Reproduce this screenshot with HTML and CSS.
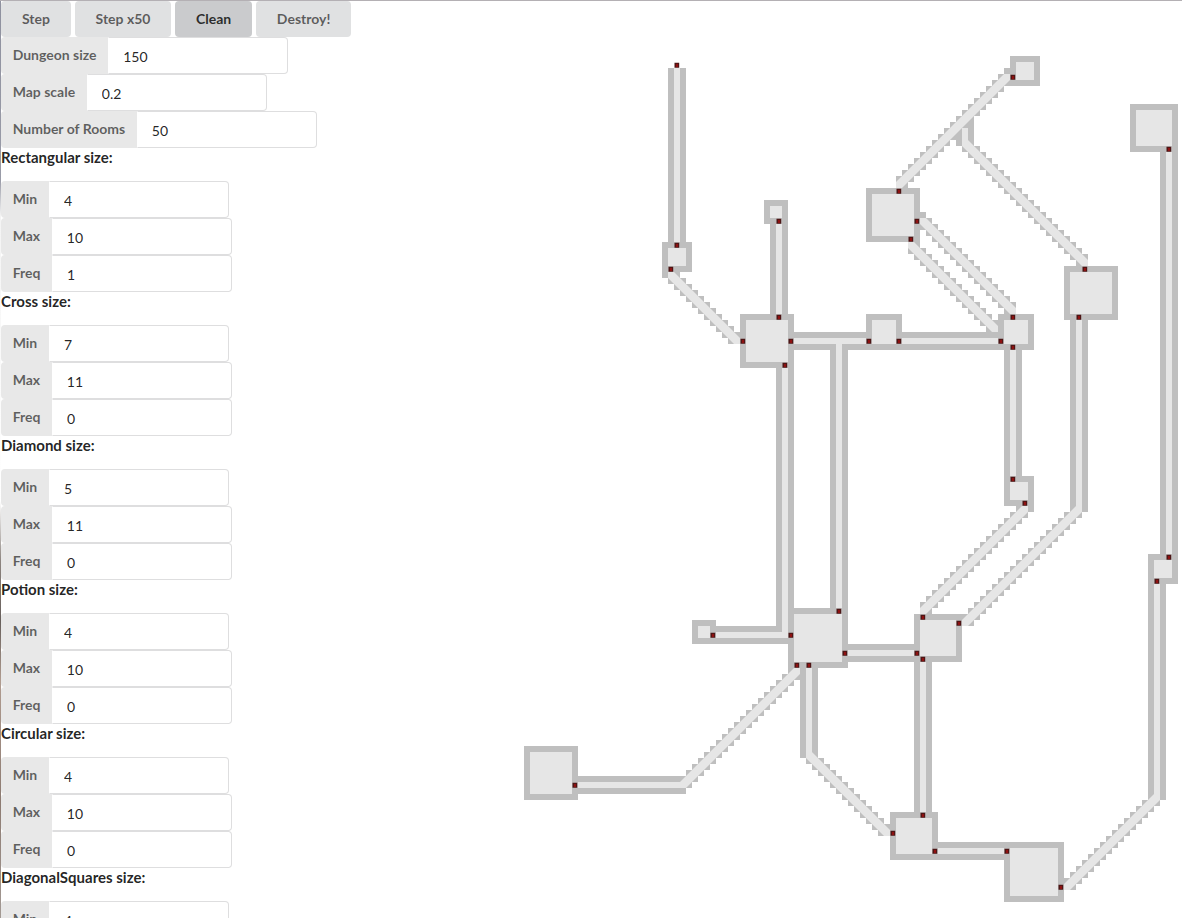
FILE: index.html
```html
<!DOCTYPE html>
<html lang="en">
<head>
<meta charset="utf-8">
<title>Dungeon generator</title>
<link rel="stylesheet" href="styles.css">
</head>
<body>
<main class="app">
  <section class="panel">
    <div class="buttons">
      <button class="button">Step</button>
      <button class="button">Step x50</button>
      <button class="button active">Clean</button>
      <button class="button">Destroy!</button>
    </div>
    <label class="field"><span class="label">Dungeon size</span><input class="value" value="150"></label>
    <label class="field"><span class="label">Map scale</span><input class="value" value="0.2"></label>
    <label class="field"><span class="label">Number of Rooms</span><input class="value" value="50"></label>

    <h4 class="heading">Rectangular size:</h4>
    <label class="field"><span class="label">Min</span><input class="value" value="4"></label>
    <label class="field"><span class="label">Max</span><input class="value" value="10"></label>
    <label class="field"><span class="label">Freq</span><input class="value" value="1"></label>

    <h4 class="heading">Cross size:</h4>
    <label class="field"><span class="label">Min</span><input class="value" value="7"></label>
    <label class="field"><span class="label">Max</span><input class="value" value="11"></label>
    <label class="field"><span class="label">Freq</span><input class="value" value="0"></label>

    <h4 class="heading">Diamond size:</h4>
    <label class="field"><span class="label">Min</span><input class="value" value="5"></label>
    <label class="field"><span class="label">Max</span><input class="value" value="11"></label>
    <label class="field"><span class="label">Freq</span><input class="value" value="0"></label>

    <h4 class="heading">Potion size:</h4>
    <label class="field"><span class="label">Min</span><input class="value" value="4"></label>
    <label class="field"><span class="label">Max</span><input class="value" value="10"></label>
    <label class="field"><span class="label">Freq</span><input class="value" value="0"></label>

    <h4 class="heading">Circular size:</h4>
    <label class="field"><span class="label">Min</span><input class="value" value="4"></label>
    <label class="field"><span class="label">Max</span><input class="value" value="10"></label>
    <label class="field"><span class="label">Freq</span><input class="value" value="0"></label>

    <h4 class="heading">DiagonalSquares size:</h4>
    <label class="field"><span class="label">Min</span><input class="value" value="4"></label>
  </section>
  <svg class="map" viewBox="400 1 782 917" width="782" height="917" role="img" aria-label="Dungeon map">
    <path id="walls" class="walls"/>
    <path id="floors" class="floors"/>
    <path id="doorframes" class="doorframes"/>
    <path id="doors" class="doors"/>
  </svg>
</main>
<script src="map.js"></script>
</body>
</html>
```
FILE: styles.css
```css
* { box-sizing: border-box; }

body {
  margin: 0;
  background: #fff;
  color: rgba(0, 0, 0, .87);
  font: 14px/1.2857 Lato, "Liberation Sans", sans-serif;
}

.app {
  display: flex;
  height: 918px;
  overflow: hidden;
  border-top: 1px solid #b4b0b4;
  background: linear-gradient(#8f919f, #9a9ca8 180px, #f4f4f4 215px, #fff 500px, #8d8580 560px, #675f5b 620px, #b09c90 680px, #8d7b72 800px, #a39a94) 0 0 / 1px 100% no-repeat;
}

.panel {
  flex: 0 0 400px;
  padding-left: 1px;
}

.buttons {
  display: flex;
  gap: 3.6px;
  height: 36px;
}

.button {
  height: 36px;
  padding: 0 21px;
  border: 0;
  border-radius: 4px;
  background: #e0e1e2;
  color: rgba(0, 0, 0, .6);
  font: bold 14px/14px Lato, "Liberation Sans", sans-serif;
}

.button.active {
  background: #cacbcd;
  color: rgba(0, 0, 0, .8);
}

.field {
  display: flex;
  height: 37px;
}

.label {
  padding: 0 11.67px;
  border-radius: 4px 0 0 4px;
  background: #e8e8e8;
  color: rgba(0, 0, 0, .6);
  font-weight: bold;
  line-height: 36px;
}

.value {
  width: 180px;
  height: 37px;
  padding: 2px 14px 0;
  border: 1px solid #dededf;
  border-left-color: transparent;
  border-radius: 0 4px 4px 0;
  background: #fff;
  color: rgba(0, 0, 0, .87);
  font: 14px/17px Lato, "Liberation Sans", sans-serif;
  outline: none;
}

.heading {
  height: 19px;
  margin: 0 0 14px;
  font-size: 15px;
  line-height: 19px;
}

.map {
  display: block;
  flex: none;
}

.walls { fill: #bfbfbf; }
.floors { fill: #e6e6e6; }
.doorframes { fill: #4d1515; }
.doors { fill: #8f1111; }
```
FILE: map.js
```js
const CELL = 6;

// Room bounds including walls: left, top, right, bottom
const rooms = [
  [662, 242, 692, 272], [764, 200, 788, 224], [740, 314, 794, 368],
  [866, 314, 902, 350], [998, 314, 1034, 350], [866, 188, 920, 242],
  [1010, 56, 1040, 86], [1064, 266, 1118, 320], [1130, 104, 1178, 152],
  [1004, 476, 1034, 506], [914, 614, 962, 662], [788, 608, 848, 668],
  [692, 620, 716, 644], [524, 746, 578, 800], [890, 812, 938, 860],
  [1004, 842, 1064, 902], [1148, 554, 1178, 584]
];

// Vertical corridors: floor x, top, bottom
const vertical = [
  [674, 68, 242], [776, 224, 314], [836, 344, 608], [782, 368, 638],
  [920, 662, 812], [1010, 350, 476], [1076, 320, 512], [806, 668, 758],
  [1154, 584, 800], [1166, 152, 554]
];

// Horizontal corridors: floor y, left, right
const horizontal = [
  [338, 794, 866], [338, 902, 998], [632, 716, 788],
  [650, 848, 914], [848, 938, 1004], [782, 578, 686]
];

// Diagonal corridors: first cell, last cell
const diagonal = [
  [668, 272, 734, 338], [1076, 506, 962, 620], [1022, 506, 920, 608],
  [806, 752, 884, 830], [794, 668, 680, 782], [1154, 794, 1064, 884],
  [1004, 74, 896, 182], [920, 218, 1010, 308], [908, 242, 992, 326],
  [962, 140, 1082, 260]
];

// Wall pieces at corridor bends: left, top, right, bottom
const corners = [
  [662, 272, 668, 278], [1028, 506, 1034, 512], [1004, 68, 1010, 74],
  [920, 212, 926, 218], [956, 128, 962, 146], [962, 116, 974, 146],
  [776, 626, 788, 644]
];

const doorCells = [
  [674, 62], [674, 242], [668, 266], [740, 338], [776, 218], [776, 314],
  [788, 338], [866, 338], [896, 338], [998, 338], [782, 362], [836, 608],
  [710, 632], [788, 632], [794, 662], [806, 662], [842, 650], [914, 650],
  [920, 614], [920, 656], [956, 620], [920, 812], [890, 830], [932, 848],
  [1004, 848], [1058, 884], [572, 782], [1010, 74], [896, 188], [914, 218],
  [908, 236], [1010, 314], [1010, 344], [1010, 476], [1022, 500],
  [1082, 266], [1076, 314], [1166, 146], [1166, 554], [1154, 578]
];

let walls = "";
let floors = "";
const box = (l, t, r, b) => `M${l} ${t}H${r}V${b}H${l}Z`;

for (const [l, t, r, b] of rooms) {
  walls += box(l, t, r, b);
  floors += box(l + CELL, t + CELL, r - CELL, b - CELL);
}
for (const [x, t, b] of vertical) {
  walls += box(x - CELL, t, x + 2 * CELL, b);
  floors += box(x, t, x + CELL, b);
}
for (const [y, l, r] of horizontal) {
  walls += box(l, y - CELL, r, y + 2 * CELL);
  floors += box(l, y, r, y + CELL);
}
for (const c of corners) walls += box(...c);
floors += box(962, 128, 968, 146);

for (const [x1, y1, x2, y2] of diagonal) {
  const s = Math.sign(x2 - x1) * CELL;
  const n = Math.abs(x2 - x1) / CELL;
  for (let i = 0; i <= n; i++) {
    const x = x1 + i * s, y = y1 + i * CELL;
    walls += box(x, y, x + CELL, y + CELL);
    if (i < n) {
      walls += box(x + s, y, x + s + CELL, y + CELL);
      walls += box(x, y + CELL, x + CELL, y + 2 * CELL);
    }
  }
  // Near and far sides of the band, mirrored for corridors that run left.
  // All floor outlines keep the same winding so that overlaps stay filled.
  const a = s > 0 ? x1 : x1 + CELL;
  const z = s > 0 ? x2 + CELL : x2;
  const pts = [[a, y1], [a + s, y1], [z, y2], [z, y2 + CELL], [z - s, y2 + CELL], [a, y1 + CELL]];
  if (s < 0) pts.reverse();
  floors += "M" + pts.map(p => p.join(" ")).join("L") + "Z";
}

document.getElementById("walls").setAttribute("d", walls);
document.getElementById("floors").setAttribute("d", floors);
document.getElementById("doorframes").setAttribute("d", doorCells.map(([x, y]) => box(x + .5, y + .7, x + 5.2, y + 5.7)).join(""));
document.getElementById("doors").setAttribute("d", doorCells.map(([x, y]) => box(x + 2, y + 2, x + 4, y + 5)).join(""));
```
